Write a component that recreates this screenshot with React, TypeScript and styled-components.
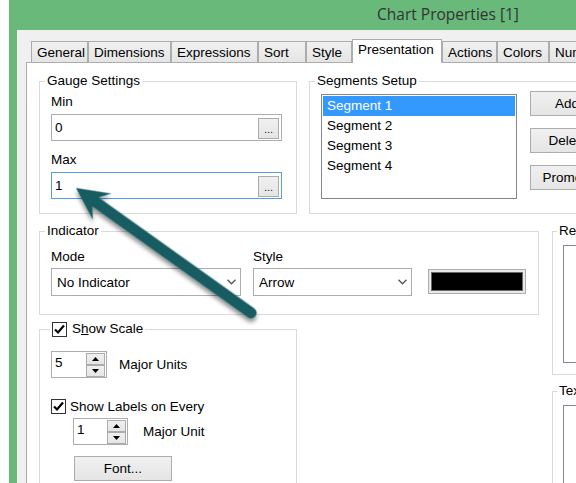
import styled, { createGlobalStyle } from 'styled-components'

const GlobalStyle = createGlobalStyle`
  html, body {
    margin: 0;
    padding: 0;
    background: #fff;
  }
  body {
    font-family: "Liberation Sans", Arial, sans-serif;
    font-size: 13.5px;
    color: #000;
  }
`

const Screen = styled.div`
  position: relative;
  width: 576px;
  height: 483px;
  overflow: hidden;
  display: flex;
  align-items: flex-start;
  background: #fff;
`
const Desktop = styled.div`
  width: 9px;
  height: 100%;
  flex-shrink: 0;
  background: #fff;
`
const Window = styled.div`
  flex-shrink: 0;
  width: 862px;
  height: 620px;
  background: #68b97a;
  display: flex;
  flex-direction: column;
  padding: 0 8px;
`
const TitleBar = styled.div`
  flex-shrink: 0;
  height: 27px;
  padding-bottom: 3px;
  display: flex;
  align-items: center;
  justify-content: center;
  font-family: "Open Sans", "Noto Sans", sans-serif;
  font-size: 15.5px;
  color: #333;
`
const Dialog = styled.div`
  flex: 1;
  min-height: 0;
  background: #f0f0f0;
  padding: 9px 0 0 9px;
  display: flex;
  flex-direction: column;
`
const TabStrip = styled.div`
  flex-shrink: 0;
  display: flex;
  align-items: flex-start;
  height: 24px;
  margin: 0 0 -1px 5px;
  position: relative;
  z-index: 1;
`
const Tab = styled.div<{ $w: number; $active?: boolean }>`
  box-sizing: border-box;
  width: ${p => p.$w}px;
  height: ${p => (p.$active ? 24 : 21)}px;
  margin-top: ${p => (p.$active ? 0 : 2)}px;
  padding: 0 0 ${p => (p.$active ? 4 : 0)}px 5px;
  display: flex;
  align-items: center;
  flex-shrink: 0;
  white-space: nowrap;
  border: 1px solid #acacac;
  border-bottom: none;
  background: ${p => (p.$active ? '#fff' : 'linear-gradient(#f0f0f0, #e5e5e5)')};
`
const Panel = styled.div`
  position: relative;
  z-index: 0;
  flex: 1;
  background: #fff;
  border: 1px solid #acacac;
  border-right: none;
  padding: 10px 0 0 12px;
  display: flex;
  flex-direction: column;
  gap: 9px;
`
const Row = styled.div<{ $gap: number; $align?: string }>`
  display: flex;
  align-items: ${p => p.$align ?? 'flex-start'};
  gap: ${p => p.$gap}px;
  flex-shrink: 0;
`
const Column = styled.div`
  display: flex;
  flex-direction: column;
  align-items: flex-start;
`
const Group = styled.fieldset<{ $w: number; $pad?: string; $top?: number }>`
  box-sizing: border-box;
  width: ${p => p.$w}px;
  min-width: 0;
  margin: ${p => p.$top ?? 0}px 0 0 0;
  border: 1px solid #dadada;
  padding: ${p => p.$pad ?? '0 14px 14px 11px'};
  align-self: stretch;
`
const Caption = styled.legend<{ $shift?: number }>`
  padding: 0 2px;
  margin-left: ${p => p.$shift ?? -6}px;
  line-height: 16px;
  height: 16px;
`
const CaptionInner = styled.span`
  display: inline-flex;
  align-items: center;
  gap: 5px;
  height: 16px;
`
const FieldLabel = styled.div<{ $top: number }>`
  margin-top: ${p => p.$top}px;
  line-height: 16px;
  height: 16px;
`
const TextBox = styled.div<{ $focused?: boolean }>`
  box-sizing: border-box;
  margin-top: 4px;
  height: 27px;
  border: 1px solid ${p => (p.$focused ? '#569de5' : '#abadb3')};
  background: #fff;
  display: flex;
  align-items: center;
  padding: 0 2px 0 3px;
`
const Value = styled.span`
  flex: 1;
  line-height: 16px;
`
const DotsButton = styled.div`
  box-sizing: border-box;
  width: 21px;
  height: 21px;
  margin-top: 2px;
  border: 1px solid #acacac;
  background: linear-gradient(#f0f0f0, #e5e5e5);
  font-size: 11px;
  line-height: 11px;
  display: flex;
  align-items: flex-end;
  justify-content: center;
  padding-bottom: 3px;
  color: #222;
`
const ListBox = styled.div<{ $w: number; $h: number; $top: number }>`
  box-sizing: border-box;
  width: ${p => p.$w}px;
  height: ${p => p.$h}px;
  margin-top: ${p => p.$top}px;
  border: 1px solid #828790;
  background: #fff;
  padding: 1px;
  flex-shrink: 0;
`
const ListItem = styled.div<{ $selected?: boolean }>`
  height: 20px;
  line-height: 20px;
  padding-left: 4px;
  background: ${p => (p.$selected ? '#3399ff' : 'transparent')};
  color: ${p => (p.$selected ? '#fff' : '#000')};
`
const ButtonStack = styled.div`
  display: flex;
  flex-direction: column;
  gap: 12px;
  margin-top: 2px;
`
const PushButton = styled.div<{ $w: number }>`
  box-sizing: border-box;
  width: ${p => p.$w}px;
  height: 25px;
  flex-shrink: 0;
  border: 1px solid #acacac;
  background: linear-gradient(#f0f0f0, #e5e5e5);
  display: flex;
  align-items: center;
  justify-content: center;
  white-space: nowrap;
`
const Field = styled.div<{ $w: number; $left?: number }>`
  width: ${p => p.$w}px;
  margin-left: ${p => p.$left ?? 0}px;
  display: flex;
  flex-direction: column;
`
const Combo = styled.div`
  box-sizing: border-box;
  margin-top: 3px;
  height: 28px;
  border: 1px solid #acacac;
  background: #fff;
  display: flex;
  align-items: center;
  justify-content: space-between;
  padding: 0 4px 0 5px;
`
const Swatch = styled.div`
  box-sizing: border-box;
  width: 98px;
  height: 25px;
  margin: 0 0 2px 16px;
  border: 1px solid #adadad;
  background: #e8e8e8;
  padding: 2px;
`
const SwatchFill = styled.div`
  height: 100%;
  background: #000;
  border: 1px solid #6a6a6a;
  box-sizing: border-box;
`
const CheckBox = styled.span`
  box-sizing: border-box;
  width: 15px;
  height: 15px;
  border: 1px solid #333;
  background: #fff;
  display: inline-flex;
  align-items: center;
  justify-content: center;
  flex-shrink: 0;
`
const SpinRow = styled.div<{ $top: number; $left?: number }>`
  display: flex;
  align-items: center;
  margin-top: ${p => p.$top}px;
  margin-left: ${p => p.$left ?? 0}px;
`
const Spinner = styled.div<{ $w: number }>`
  box-sizing: border-box;
  width: ${p => p.$w}px;
  height: 27px;
  border: 1px solid #abadb3;
  background: #fff;
  display: flex;
  align-items: flex-start;
  padding: 1px 1px 0 3px;
`
const SpinText = styled.span`
  flex: 1;
  line-height: 20px;
`
const SpinButtons = styled.div`
  display: flex;
  flex-direction: column;
  width: 19px;
`
const SpinButton = styled.div`
  box-sizing: border-box;
  height: 12px;
  border: 1px solid #acacac;
  background: linear-gradient(#f0f0f0, #e5e5e5);
  display: flex;
  align-items: center;
  justify-content: center;
`
const SideLabel = styled.span<{ $gap: number }>`
  margin-left: ${p => p.$gap}px;
  line-height: 16px;
`
const CheckRow = styled.div<{ $top: number }>`
  display: flex;
  align-items: center;
  gap: 4px;
  margin-top: ${p => p.$top}px;
  height: 16px;
`
const FontButton = styled(PushButton)`
  margin: 11px 0 0 23px;
`
const InnerBox = styled.div<{ $h: number }>`
  box-sizing: border-box;
  margin-top: 6px;
  height: ${p => p.$h}px;
  border: 1px solid #828790;
  background: #fff;
`
const Overlay = styled.svg`
  position: absolute;
  left: 0;
  top: 0;
  pointer-events: none;
  z-index: 5;
`

const Chevron = () => (
  <svg width="9" height="6" viewBox="0 0 9 6">
    <path d="M0.5 0.8 L4.5 4.8 L8.5 0.8" fill="none" stroke="#555" strokeWidth="1.3" />
  </svg>
)

const Tick = () => (
  <svg width="13" height="13" viewBox="0 0 13 13">
    <path d="M2 6.5 L5 9.5 L11 2.5" fill="none" stroke="#000" strokeWidth="2.2" />
  </svg>
)

const Arrowhead = ({ up }: { up?: boolean }) => (
  <svg width="7" height="4" viewBox="0 0 7 4">
    <path d={up ? 'M0 4 L3.5 0 L7 4 Z' : 'M0 0 L3.5 4 L7 0 Z'} fill="#000" />
  </svg>
)

const tabs = [
  { label: 'General', w: 57 },
  { label: 'Dimensions', w: 83 },
  { label: 'Expressions', w: 87 },
  { label: 'Sort', w: 48 },
  { label: 'Style', w: 46 },
  { label: 'Presentation', w: 90, active: true },
  { label: 'Actions', w: 55 },
  { label: 'Colors', w: 52 },
  { label: 'Numbers', w: 70 },
]

const segments = ['Segment 1', 'Segment 2', 'Segment 3', 'Segment 4']

function SpinBox({ w, value }: { w: number; value: string }) {
  return (
    <Spinner $w={w}>
      <SpinText>{value}</SpinText>
      <SpinButtons>
        <SpinButton><Arrowhead up /></SpinButton>
        <SpinButton><Arrowhead /></SpinButton>
      </SpinButtons>
    </Spinner>
  )
}

export default function App() {
  return (
    <Screen>
      <GlobalStyle />
      <Desktop />
      <Window>
        <TitleBar>Chart Properties [1]</TitleBar>
        <Dialog>
          <TabStrip>
            {tabs.map(t => (
              <Tab key={t.label} $w={t.w} $active={t.active}>{t.label}</Tab>
            ))}
          </TabStrip>
          <Panel>
            <Row $gap={12}>
              <Group $w={258}>
                <Caption>Gauge Settings</Caption>
                <FieldLabel $top={5}>Min</FieldLabel>
                <TextBox>
                  <Value>0</Value>
                  <DotsButton>...</DotsButton>
                </TextBox>
                <FieldLabel $top={11}>Max</FieldLabel>
                <TextBox $focused>
                  <Value>1</Value>
                  <DotsButton>...</DotsButton>
                </TextBox>
              </Group>
              <Group $w={400} $pad="0 11px 14px 11px">
                <Caption>Segments Setup</Caption>
                <Row $gap={13}>
                  <ListBox $w={196} $h={105} $top={5}>
                    {segments.map((s, i) => (
                      <ListItem key={s} $selected={i === 0}>{s}</ListItem>
                    ))}
                  </ListBox>
                  <ButtonStack>
                    <PushButton $w={74}>Add</PushButton>
                    <PushButton $w={76}>Delete</PushButton>
                    <PushButton $w={76}>Promote</PushButton>
                  </ButtonStack>
                </Row>
              </Group>
            </Row>
            <Row $gap={13}>
              <Column>
                <Group $w={500} $pad="0 11px 18px 11px">
                  <Caption>Indicator</Caption>
                  <Row $gap={0} $align="flex-end">
                    <Field $w={190}>
                      <FieldLabel $top={10}>Mode</FieldLabel>
                      <Combo>No Indicator<Chevron /></Combo>
                    </Field>
                    <Field $w={159} $left={12}>
                      <FieldLabel $top={10}>Style</FieldLabel>
                      <Combo>Arrow<Chevron /></Combo>
                    </Field>
                    <Swatch><SwatchFill /></Swatch>
                  </Row>
                </Group>
                <Group $w={258} $top={6} $pad="0 11px 40px 11px">
                  <Caption $shift={-1}>
                    <CaptionInner>
                      <CheckBox><Tick /></CheckBox>
                      <span>S<u>h</u>ow Scale</span>
                    </CaptionInner>
                  </Caption>
                  <SpinRow $top={14}>
                    <SpinBox w={56} value="5" />
                    <SideLabel $gap={12}>Major Units</SideLabel>
                  </SpinRow>
                  <CheckRow $top={20}>
                    <CheckBox><Tick /></CheckBox>
                    <span>Show Labels on Every</span>
                  </CheckRow>
                  <SpinRow $top={4} $left={22}>
                    <SpinBox w={55} value="1" />
                    <SideLabel $gap={15}>Major Unit</SideLabel>
                  </SpinRow>
                  <FontButton $w={98}>Font...</FontButton>
                </Group>
              </Column>
              <Column>
                <Group $w={200} $pad="0 0 11px 10px">
                  <Caption>Reference Lines</Caption>
                  <InnerBox $h={118} />
                </Group>
                <Group $w={200} $top={8} $pad="0 0 11px 10px">
                  <Caption>Text in Chart</Caption>
                  <InnerBox $h={100} />
                </Group>
              </Column>
            </Row>
          </Panel>
        </Dialog>
      </Window>
      <Overlay width="576" height="483" viewBox="0 0 576 483">
        <defs>
          <filter id="arrowShadow" x="-20%" y="-20%" width="140%" height="140%">
            <feDropShadow dx="2" dy="3" stdDeviation="2" floodColor="#000" floodOpacity="0.45" />
          </filter>
        </defs>
        <g transform="translate(76 188) rotate(35.5)" filter="url(#arrowShadow)">
          <path
            d="M0 0 L32 -16 L24 -5.5 L215 -5.5 A5.5 5.5 0 0 1 215 5.5 L24 5.5 L32 16 Z"
            fill="#175b60"
          />
        </g>
      </Overlay>
    </Screen>
  )
}
